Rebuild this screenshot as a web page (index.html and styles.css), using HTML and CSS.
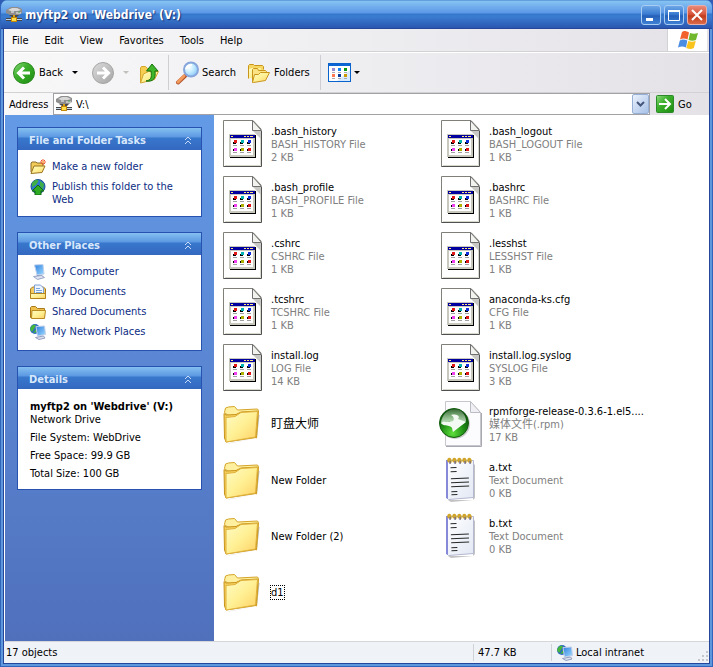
FILE: index.html
```
<!DOCTYPE html>
<html lang="en">

<head>
  <meta charset="UTF-8">
  <meta name="viewport" content="width=device-width, initial-scale=1.0">
  <title>myftp2 on 'Webdrive' (V:)</title>
  <link rel="stylesheet" href="styles.css">
</head>

<body>
  <!-- icon sprites -->
  <svg class="sprites" aria-hidden="true">
    <defs>
      <linearGradient id="g-folder" x1="0" y1="0" x2="1" y2="1">
        <stop offset="0" stop-color="#fffbc4" />
        <stop offset="0.5" stop-color="#fff094" />
        <stop offset="1" stop-color="#ffcf62" />
      </linearGradient>
      <linearGradient id="g-back" x1="0" y1="0" x2="1" y2="1">
        <stop offset="0" stop-color="#8fdc80" />
        <stop offset="0.4" stop-color="#3cb02c" />
        <stop offset="1" stop-color="#1d8c10" />
      </linearGradient>
      <linearGradient id="g-fwd" x1="0" y1="0" x2="1" y2="1">
        <stop offset="0" stop-color="#dcdcdc" />
        <stop offset="1" stop-color="#a4a4a4" />
      </linearGradient>
      <radialGradient id="g-lens" cx="0.35" cy="0.35" r="0.7">
        <stop offset="0" stop-color="#ffffff" />
        <stop offset="0.5" stop-color="#c4ecff" />
        <stop offset="1" stop-color="#8cc8fa" />
      </radialGradient>
      <radialGradient id="g-ball" cx="0.45" cy="0.85" r="0.8">
        <stop offset="0" stop-color="#5fe03c" />
        <stop offset="0.5" stop-color="#1f8e14" />
        <stop offset="1" stop-color="#0a4a08" />
      </radialGradient>
      <linearGradient id="g-gloss" x1="0" y1="0" x2="0" y2="1">
        <stop offset="0" stop-color="#fff" stop-opacity="0.2" />
        <stop offset="1" stop-color="#fff" stop-opacity="0.8" />
      </linearGradient>
      <linearGradient id="g-screen" x1="0" y1="0" x2="1" y2="1">
        <stop offset="0" stop-color="#2f7fe0" />
        <stop offset="1" stop-color="#9fdcff" />
      </linearGradient>
      <linearGradient id="g-page" x1="0" y1="0" x2="1" y2="1">
        <stop offset="0" stop-color="#ffffff" />
        <stop offset="1" stop-color="#e2e8f4" />
      </linearGradient>
    </defs>

    <symbol id="i-netdrive" viewBox="0 0 16 16">
      <path d="M0 3 5 0h7l4 2v4l-3 2H4L0 6z" fill="#8e8e8e" />
      <path d="M2 3 6 1h5l4 2-3 1H5z" fill="#d8d8d8" />
      <path d="M3 8h10l-2 2H6z" fill="#4a4a4a" />
      <path d="M5 5h3M10 6h5" stroke="#f4f4f4" />
      <path d="M12 5h2" stroke="#57a650" />
      <path d="M8 8v4" stroke="#d8a010" stroke-width="2" />
      <path d="M0 12.500h5M11 12.500h5" stroke="#444" stroke-width="3" />
      <path d="M0 12.500h5M11 12.500h5" stroke="#c6d8e8" />
      <rect x="5.500" y="10.500" width="5" height="4" fill="#ffe04c" stroke="#c88808" />
    </symbol>

    <symbol id="i-back" viewBox="0 0 24 24">
      <circle cx="12" cy="12" r="10.500" fill="url(#g-back)" stroke="#2a8a1e" />
      <path d="M18 12H7M12 6.500 6.500 12l5.500 5.500" fill="none" stroke="#fff" stroke-width="3" />
    </symbol>

    <symbol id="i-forward" viewBox="0 0 24 24">
      <circle cx="12" cy="12" r="10.500" fill="url(#g-fwd)" stroke="#a6a6a6" />
      <path d="M6 12h11M12 6.500l5.500 5.500-5.500 5.500" fill="none" stroke="#fff" stroke-width="3" />
    </symbol>

    <symbol id="i-up" viewBox="0 0 24 24">
      <path d="M2.500 21.500V7l1-1.500h4l2 2h8v4" fill="#f6cf52" stroke="#d6a62c" />
      <path d="M2.500 22 5.500 13l5-2.500h10l-4 8z" fill="url(#g-folder)" stroke="#d6a62c" />
      <path d="M8 20c5-1 6-3 5-10H8.500l5.500-7 6 7h-3c1 8-2 11-9 10z" fill="#3fb52c" stroke="#17720d" />
    </symbol>

    <symbol id="i-search" viewBox="0 0 24 24">
      <path d="M3 21.500 10 15" stroke="#b0532a" stroke-width="4" stroke-linecap="round" />
      <path d="M3 21 9 15" stroke="#f39b5e" stroke-width="3" stroke-linecap="round" />
      <circle cx="16" cy="8.500" r="7" fill="url(#g-lens)" stroke="#86a6dc" stroke-width="2" />
      <path d="M11 8c1-3 3-4 6-4" fill="none" stroke="#fff" stroke-width="2" />
    </symbol>

    <symbol id="i-folders" viewBox="0 0 24 24">
      <path d="M1.500 17.500v-13l1-1h4l1 1h8l1 1v3" fill="#f7d764" stroke="#c9961c" />
      <path d="M2 17V8l3-1h9v11z" fill="url(#g-folder)" />
      <path d="M5.500 21.500v-13l1-1h4l1 2h7l1 1v2" fill="#fbe384" stroke="#c9961c" />
      <path d="M5.500 21.500 7.500 13.500h4l2-2h9l-4 8-12 2z" fill="url(#g-folder)" stroke="#c9961c" />
    </symbol>

    <symbol id="i-views" viewBox="0 0 24 20">
      <rect x="0.500" y="0.500" width="22" height="18" fill="#fff" stroke="#0a62cc" />
      <rect x="1" y="1" width="21" height="2" fill="#0b66d4" />
      <path d="M22 7v11H9z" fill="#d6ebff" />
      <path d="M4 5h3v3H4z" fill="#9a8ad0" />
      <path d="M10 5h3v3h-3z" fill="#1684f0" />
      <path d="M16 5h3v3h-3z" fill="#089a10" />
      <path d="M4 11h3v3H4z" fill="#ff7850" />
      <path d="M10 11h3v3h-3z" fill="#0a3a98" />
      <path d="M16 11h3v3h-3z" fill="#cc9a00" />
      <path d="M4 9.500h3M10 9.500h3M16 9.500h3M4 15.500h3M10 15.500h3M16 15.500h3" stroke="#a8a8b0" />
    </symbol>

    <symbol id="i-flag" viewBox="0 0 20 18">
      <path d="M4 1c2-1.500 4-1 7 .500L9.500 8.500C7 7.500 4.500 7 2 8.500z" fill="#f2602c" />
      <path d="M12 2c3 1 5 1 8 0l-2 7c-2.500 1-5 1-7.500 0z" fill="#71b82c" />
      <path d="M1.800 9.500c2.500-1.500 5-1 7.500 0L8 16.500c-3-1.500-5-1.500-8 0z" fill="#4b8de2" />
      <path d="M10.300 10c2.500 1 5 1 7.500 0l-2 7c-2.500 1.500-5 1-7.500 0z" fill="#fac31d" />
    </symbol>

    <symbol id="i-go" viewBox="0 0 18 18">
      <rect x="0.500" y="0.500" width="17" height="17" rx="1" fill="url(#g-back)" stroke="#2d8a2a" />
      <path d="M3 9h10M9 4l5 5-5 5" fill="none" stroke="#fff" stroke-width="2" />
    </symbol>

    <symbol id="i-chevrons" viewBox="0 0 8 9">
      <path d="M1 4 4 1l3 3M1 8l3-3 3 3" fill="none" stroke="#c8dcf8" />
    </symbol>

    <symbol id="i-newfolder" viewBox="0 0 16 16">
      <path d="M1 13V4l1-1h4l1 1h6v3" fill="#f1cc58" stroke="#8a6a28" />
      <path d="M1 14.500 4 7h11l-3 6.500z" fill="url(#g-folder)" stroke="#9a7420" />
      <path d="M13 0v6M10 3h6M11 1l4 4M15 1l-4 4" stroke="#f0552c" />
      <circle cx="13" cy="3" r="1" fill="#ffd070" />
    </symbol>

    <symbol id="i-publish" viewBox="0 0 16 16">
      <circle cx="8" cy="7.500" r="7" fill="#2e78cc" stroke="#1c4f94" />
      <path d="M2 4c2-3 5-4 6-3 1 2-1 3-2 5l-4 2zM10 2l4 3-1 5-3-3z" fill="#3fae46" />
      <path d="M8 6l6 6h-3v4H5v-4H2z" fill="#2faa22" stroke="#0f6a12" />
    </symbol>

    <symbol id="i-computer" viewBox="0 0 16 16">
      <path d="M4.500 1 13 .500 14 10 7 11z" fill="url(#g-screen)" stroke="#c0d2ec" />
      <path d="M7 11h5l1 2H6z" fill="#8e9cc0" />
      <path d="M3.500 12.500l8-1 3 2-7 2z" fill="#dfe4f2" stroke="#98a4c4" />
    </symbol>

    <symbol id="i-documents" viewBox="0 0 16 16">
      <path d="M.500 14V5l2-2h11l2 2v9z" fill="#f3cd62" stroke="#a87a1c" />
      <path d="M4.500 11V1h6l3 3v7z" fill="#eef5ff" stroke="#7da0d2" />
      <path d="M6 4.500h4M6 6.500h6M6 8.500h6" stroke="#7aa6e0" />
      <path d="M.500 9.500h15v5H.500z" fill="url(#g-folder)" stroke="#b4841c" />
    </symbol>

    <symbol id="i-shared" viewBox="0 0 16 16">
      <path d="M.500 13.500v-10l1-1h4l2 2h7v9z" fill="#f0c04c" stroke="#a87a1c" />
      <path d="M1.500 14.500 2 6.500h13.500l-1 8z" fill="url(#g-folder)" stroke="#b98a20" />
    </symbol>

    <symbol id="i-network" viewBox="0 0 16 16">
      <circle cx="5" cy="5" r="5" fill="#2f69c4" />
      <path d="M0 5c1-4 4-5 6-4L4 5 2 8zM3 9l3-4 2 3z" fill="#44b63c" />
      <path d="M6 2.500 14.500 2l1 8.500-8 1.500z" fill="url(#g-screen)" stroke="#c2cfe8" />
      <path d="M5.500 13.500l8-1.500 1.500 2-6 1.500z" fill="#dde2f0" stroke="#939ec0" />
    </symbol>

    <symbol id="i-file" viewBox="0 0 48 48">
      <path d="M5 1h29l9 9v37H5z" fill="#fff" />
      <path d="M41.500 12v33.500H6" fill="none" stroke="#d8d8cc" />
      <path d="M42.500 11v35.500H5" fill="none" stroke="#505050" />
      <path d="M4.500 47V.500H34l8.500 9" fill="none" stroke="#808078" />
      <path d="M34 11h8v8z" fill="#c8c8c4" />
      <path d="M33.500.500v10h9z" fill="#f2f2ee" stroke="#707070" />
      <rect x="11" y="15" width="26" height="23" fill="#000" />
      <rect x="10" y="14" width="26" height="23" fill="#c8c8bc" />
      <rect x="12" y="19" width="22" height="16" fill="#fff" />
      <rect x="11" y="15" width="25" height="3" fill="#0000a0" />
      <path d="M12 16.500h2M25 16.500h2M28 16.500h2M31 16.500h3" stroke="#ffe880" />
      <path d="M14 25.500h4M21 25.500h4M28 25.500h4M14 32.500h4M21 32.500h4M28 32.500h4" stroke="#a0a0a0" />
      <path d="M14 22h3v2h-3zM21 22h3v2h-3zM28 22h3v2h-3zM14 29h3v2h-3zM21 29h3v2h-3zM28 29h3v2h-3z" fill="#000" />
      <path d="M15 20h3v3h-3zM29 28h3v3h-3z" fill="#e01818" />
      <path d="M22 20h3v3h-3z" fill="#00b4b4" />
      <path d="M29 20h3v3h-3z" fill="#1030e0" />
      <path d="M15 28h3v3h-3z" fill="#f040f0" />
      <path d="M22 28h3v3h-3z" fill="#b0b000" />
    </symbol>

    <symbol id="i-folder" viewBox="0 0 48 48">
      <path d="M8 43.500 38 38V14l2.500 1L38 38 12 43z" fill="#8e8e8e" opacity="0.600" />
      <path d="M5.500 12.500 6.500 8l3-1 6-.500 3 3.500 20-1 1 1.500-2 27.500z" fill="#fff0a0" stroke="#d4a428" />
      <path d="M7 42 5.500 38 5 13.500 7 15l10-.500 5-2.500 17-1-2 26.500z" fill="#f5cf5c" stroke="#c8941c" />
      <path d="M7 42V17.500l9-1 6-4 16.500-1-2 25.500z" fill="url(#g-folder)" stroke="#e0b23c" />
    </symbol>

    <symbol id="i-media" viewBox="0 0 48 48">
      <path d="M8.500 1.500h25l10 11v33h-35z" fill="#fcfcfe" stroke="#c6c6cc" />
      <path d="M44.500 13v33.500H9" fill="none" stroke="#a8a8b0" />
      <path d="M33.500 1.500v11h10z" fill="#f0f0f4" stroke="#bcbcc4" />
      <circle cx="18" cy="24" r="15" fill="#888" opacity="0.400" />
      <circle cx="17" cy="23" r="14.500" fill="url(#g-ball)" stroke="#145c10" />
      <path d="M4 23C5 13 13 7 22 10c4 2 7 6 7 11-3 6-12 4-15 1-4-1-8 0-10 1z" fill="url(#g-gloss)" />
      <path d="M14 15c5-1 7 0 8 2l-1 2 8 3-13 10c-1-3 0-5-4-6-3-1-6 0-8-3 4-3 9 0 12-2 2-2 0-5-2-6z" fill="#f2faf2" />
    </symbol>

    <symbol id="i-text" viewBox="0 0 48 48">
      <path d="M11 44h25V7l2 2v33l-2 2-22 2z" fill="#9a9a9a" opacity="0.600" />
      <path d="M9.500 4.500h27v37l-25 2-2-2z" fill="url(#g-page)" stroke="#b4b8d0" />
      <path d="M9 4v38l2 1V4z" fill="#8688d8" />
      <path d="M14 11.500h6M14 15.500h6M14 22.500h18M14 26.500h18M14 30.500h18M14 35.500h6M14 38.500h6" transform="rotate(-2 20 26)" stroke="#282828" />
      <path d="M12 6c-2-2 0-4 1-3s1 3 0 4M17 6c-2-2 0-4 1-3s1 3 0 4M22 6c-2-2 0-4 1-3s1 3 0 4M27 6c-2-2 0-4 1-3s1 3 0 4M32 6c-2-2 0-4 1-3s1 3 0 4" fill="none" stroke="#cfa428" stroke-width="2" />
      <path d="M13 5v3M18 5v3M23 5v3M28 5v3M33 5v3" stroke="#4a4a9a" />
    </symbol>
  </svg>

  <div class="window">
    <header class="titlebar">
      <svg class="icon16"><use href="#i-netdrive" /></svg>
      <h1>myftp2 on 'Webdrive' (V:)</h1>
      <div class="controls">
        <button class="ctl" aria-label="Minimize"><svg viewBox="0 0 18 18"><path d="M4 13.500h7" stroke="#fff" stroke-width="3" /></svg></button>
        <button class="ctl" aria-label="Maximize"><svg viewBox="0 0 18 18"><path d="M3 5h12" stroke="#fff" stroke-width="2" /><path d="M3.500 4.500h11v10h-11z" fill="none" stroke="#fff" /></svg></button>
        <button class="ctl close" aria-label="Close"><svg viewBox="0 0 18 18"><path d="M4 4l10 10M14 4 4 14" stroke="#fff" stroke-width="2" /></svg></button>
      </div>
    </header>

    <div class="client">
      <nav class="menubar">
        <button>File</button>
        <button>Edit</button>
        <button>View</button>
        <button>Favorites</button>
        <button>Tools</button>
        <button>Help</button>
        <div class="flag"><svg><use href="#i-flag" /></svg></div>
      </nav>

      <div class="toolbar">
        <button class="tool back"><svg class="icon24"><use href="#i-back" /></svg>Back<i class="arrow"></i></button>
        <button class="tool forward" aria-label="Forward" disabled><svg class="icon24"><use href="#i-forward" /></svg><i class="arrow"></i></button>
        <button class="tool up" aria-label="Up"><svg class="icon24"><use href="#i-up" /></svg></button>
        <span class="sep"></span>
        <button class="tool search"><svg class="icon24"><use href="#i-search" /></svg>Search</button>
        <button class="tool folders"><svg class="icon24"><use href="#i-folders" /></svg>Folders</button>
        <span class="sep"></span>
        <button class="tool views" aria-label="Views"><svg class="icon24"><use href="#i-views" /></svg><i class="arrow"></i></button>
      </div>

      <form class="address">
        <label for="path">Address</label>
        <div class="combo">
          <svg class="icon16"><use href="#i-netdrive" /></svg>
          <input type="text" id="path" value="V:\">
          <button type="button" aria-label="Show addresses"><svg viewBox="0 0 9 7"><path d="M1 1l3.500 3.500L8 1" fill="none" stroke="#45577c" stroke-width="2" /></svg></button>
        </div>
        <button type="button" class="go"><svg><use href="#i-go" /></svg>Go</button>
      </form>

      <div class="content">
        <aside class="sidebar">
          <section class="panel">
            <button class="panel-head">File and Folder Tasks<svg><use href="#i-chevrons" /></svg></button>
            <ul class="tasks">
              <li><svg class="icon16"><use href="#i-newfolder" /></svg><a href="#">Make a new folder</a></li>
              <li><svg class="icon16"><use href="#i-publish" /></svg><a href="#">Publish this folder to the Web</a></li>
            </ul>
          </section>

          <section class="panel">
            <button class="panel-head">Other Places<svg><use href="#i-chevrons" /></svg></button>
            <ul class="tasks">
              <li><svg class="icon16"><use href="#i-computer" /></svg><a href="#">My Computer</a></li>
              <li><svg class="icon16"><use href="#i-documents" /></svg><a href="#">My Documents</a></li>
              <li><svg class="icon16"><use href="#i-shared" /></svg><a href="#">Shared Documents</a></li>
              <li><svg class="icon16"><use href="#i-network" /></svg><a href="#">My Network Places</a></li>
            </ul>
          </section>

          <section class="panel">
            <button class="panel-head">Details<svg><use href="#i-chevrons" /></svg></button>
            <div class="details">
              <p><strong>myftp2 on 'Webdrive' (V:)</strong><br>Network Drive</p>
              <p>File System: WebDrive</p>
              <p>Free Space: 99.9 GB</p>
              <p>Total Size: 100 GB</p>
            </div>
          </section>
        </aside>

        <main class="files">
          <div class="file"><svg><use href="#i-file" /></svg><div>.bash_history<small>BASH_HISTORY File</small><small>2 KB</small></div></div>
          <div class="file"><svg><use href="#i-file" /></svg><div>.bash_logout<small>BASH_LOGOUT File</small><small>1 KB</small></div></div>
          <div class="file"><svg><use href="#i-file" /></svg><div>.bash_profile<small>BASH_PROFILE File</small><small>1 KB</small></div></div>
          <div class="file"><svg><use href="#i-file" /></svg><div>.bashrc<small>BASHRC File</small><small>1 KB</small></div></div>
          <div class="file"><svg><use href="#i-file" /></svg><div>.cshrc<small>CSHRC File</small><small>1 KB</small></div></div>
          <div class="file"><svg><use href="#i-file" /></svg><div>.lesshst<small>LESSHST File</small><small>1 KB</small></div></div>
          <div class="file"><svg><use href="#i-file" /></svg><div>.tcshrc<small>TCSHRC File</small><small>1 KB</small></div></div>
          <div class="file"><svg><use href="#i-file" /></svg><div>anaconda-ks.cfg<small>CFG File</small><small>1 KB</small></div></div>
          <div class="file"><svg><use href="#i-file" /></svg><div>install.log<small>LOG File</small><small>14 KB</small></div></div>
          <div class="file"><svg><use href="#i-file" /></svg><div>install.log.syslog<small>SYSLOG File</small><small>3 KB</small></div></div>
          <div class="file"><svg><use href="#i-folder" /></svg><div class="cjk">盯盘大师</div></div>
          <div class="file"><svg><use href="#i-media" /></svg><div>rpmforge-release-0.3.6-1.el5....<small>媒体文件(.rpm)</small><small>17 KB</small></div></div>
          <div class="file"><svg><use href="#i-folder" /></svg><div>New Folder</div></div>
          <div class="file"><svg><use href="#i-text" /></svg><div>a.txt<small>Text Document</small><small>0 KB</small></div></div>
          <div class="file"><svg><use href="#i-folder" /></svg><div>New Folder (2)</div></div>
          <div class="file"><svg><use href="#i-text" /></svg><div>b.txt<small>Text Document</small><small>0 KB</small></div></div>
          <div class="file"><svg><use href="#i-folder" /></svg><div class="focused">d1</div></div>
        </main>
      </div>

      <footer class="statusbar">
        <span class="count">17 objects</span>
        <span class="size">47.7 KB</span>
        <span class="zone"><svg class="icon16"><use href="#i-network" /></svg>Local intranet</span>
        <svg class="grip" viewBox="0 0 12 12"><path d="M9 0h2v2H9zM5 4h2v2H5zM9 4h2v2H9zM1 8h2v2H1zM5 8h2v2H5zM9 8h2v2H9z" fill="#c4c6cc" /></svg>
      </footer>
    </div>
  </div>
</body>

</html>
```
FILE: styles.css
```
* {
  box-sizing: border-box;
}

body {
  margin: 0;
  background: #2f5cb4;
  font: 11px/13px "DejaVu Sans Condensed", Tahoma, "Noto Sans CJK SC", sans-serif;
  color: #000;
}

button,
input {
  font: inherit;
  color: inherit;
  border: 0;
  padding: 0;
  background: none;
}

svg {
  display: block;
  flex: none;
}

.sprites {
  position: absolute;
  width: 0;
  height: 0;
}

.icon16 {
  width: 16px;
  height: 16px;
}

.icon24 {
  width: 24px;
  height: 24px;
}

/* window frame */
.window {
  min-height: 100vh;
  display: flex;
  flex-direction: column;
  border-radius: 7px 7px 0 0;
  background: #5f97dc;
  border: 1px solid #2f66bc;
  border-top: 0;
}

.titlebar {
  height: 29px;
  display: flex;
  align-items: center;
  padding: 2px 5px 0 5px;
  border-radius: 7px 7px 0 0;
  border-bottom: 1px solid #24479c;
  background: linear-gradient(#3f78c8 0, #86c4f2 1px, #74b0ee 6px, #5c98e6 13px, #3478cc 14px, #3a7cd0 17px, #2a56b0 28px);
}

.titlebar h1 {
  flex: 1;
  margin: 0 0 0 3px;
  font-size: 12px;
  line-height: 16px;
  color: #fff;
  text-shadow: 1px 1px 1px #143078;
}

.controls {
  display: flex;
  gap: 3px;
}

.ctl {
  width: 20px;
  height: 20px;
  border: 1px solid #a8ccf2;
  border-radius: 3px;
  background: linear-gradient(#6ca6e6, #3a7cd2 45%, #2560b8 55%, #3e80d4);
}

.ctl.close {
  border-color: #e8b0a8;
  background: linear-gradient(#e88a78, #d8563c 45%, #c03c1c 55%, #dc6a48);
}

.client {
  flex: 1;
  display: flex;
  flex-direction: column;
  margin: 0 2px 2px 2px;
  border: 1px solid #24479c;
  border-top: 0;
  background: #fff;
}

/* bars */
.menubar {
  height: 23px;
  display: flex;
  background: linear-gradient(90deg, #f8f8f9, #e4e2e7);
  border-bottom: 1px solid #d2d2d4;
}

.menubar button {
  padding: 0 8px;
}

.flag {
  width: 42px;
  margin-left: auto;
  padding: 1px 10px;
  background: #fff;
  border-left: 1px solid #d2d2d4;
  border-right: 2px solid #e4e2e7;
}

.flag svg {
  width: 20px;
  height: 20px;
}

.toolbar {
  height: 41px;
  display: flex;
  align-items: center;
  padding-left: 8px;
  background: linear-gradient(90deg, #f8f8f9, #e4e2e7);
  border-top: 1px solid #fff;
  border-bottom: 1px solid #d2d2d4;
}

.tool {
  height: 32px;
  display: flex;
  align-items: center;
  gap: 3px;
}

.arrow {
  border: 3px solid transparent;
  border-top-color: #000;
  border-bottom: 0;
}

.back {
  width: 79px;
}

.back .arrow {
  margin-left: 6px;
}

.forward {
  width: 47px;
  gap: 8px;
}

.forward .arrow {
  border-top-color: #c0c0bc;
}

.up {
  width: 30px;
}

.sep {
  width: 1px;
  height: 35px;
  margin-right: 6px;
  background: #cfced2;
}

.search {
  width: 72px;
}

.folders {
  width: 73px;
}

.views {
  padding-left: 1px;
  gap: 2px;
}

.address {
  height: 22px;
  display: flex;
  align-items: center;
  padding-left: 5px;
  background: linear-gradient(90deg, #f8f8f9, #e4e2e7);
}

.address label {
  width: 44px;
}

.combo {
  flex: 1;
  height: 22px;
  display: flex;
  align-items: center;
  padding-left: 2px;
  background: #fff;
  border: 1px solid #a2a2a6;
}

.combo input {
  flex: 1;
  min-width: 0;
  height: 18px;
  padding-left: 4px;
}

.combo button {
  width: 17px;
  height: 20px;
  display: flex;
  align-items: center;
  justify-content: center;
  border: 1px solid #96b0d6;
  border-radius: 2px;
  background: linear-gradient(135deg, #eaf1fc, #a8c2e8);
}

.combo button svg {
  width: 9px;
  height: 7px;
}

.go {
  width: 59px;
  display: flex;
  align-items: center;
  gap: 4px;
  padding-left: 6px;
}

.go svg {
  width: 18px;
  height: 18px;
}

/* main area */
.content {
  flex: 1;
  display: flex;
  border-left: 1px solid #fff;
}

.sidebar {
  width: 209px;
  flex: none;
  padding: 12px;
  background: linear-gradient(#639ae6, #5070bc);
}

.panel {
  margin-bottom: 15px;
  border: 1px solid #2852b0;
  background: #fff;
}

.panel-head {
  width: 100%;
  height: 22px;
  display: flex;
  align-items: center;
  justify-content: space-between;
  padding: 2px 9px 0 11px;
  font-weight: bold;
  color: #d8e8fc;
  background: linear-gradient(#84c0f0, #5c98e2 9px, #3878cc 10px, #3468c0);
}

.panel-head svg {
  width: 8px;
  height: 9px;
}

.tasks {
  margin: 0;
  padding: 9px 12px 6px 12px;
  list-style: none;
}

.tasks li {
  display: flex;
  gap: 6px;
  margin-bottom: 4px;
}

.tasks a {
  color: #0c2c84;
  text-decoration: none;
}

.tasks li a {
  margin-top: 1px;
}

.details {
  padding: 11px 12px 4px 12px;
}

.details p {
  margin: 0 0 5px 0;
}

.files {
  flex: 1;
  display: grid;
  grid-template-columns: repeat(auto-fill, 218px);
  grid-auto-rows: 56px;
  align-content: start;
  padding: 1px 0 0 5px;
}

.file {
  display: flex;
  align-items: center;
  gap: 4px;
  white-space: nowrap;
}

.file > svg {
  width: 48px;
  height: 48px;
}

.file small {
  display: block;
  height: 13px;
  font-size: 11px;
  color: #808080;
}

.file .cjk {
  font-size: 12px;
}

.file .focused {
  outline: 1px dotted #000;
}

/* status bar */
.statusbar {
  height: 22px;
  display: flex;
  align-items: center;
  background: #eff2f7;
  border-top: 1px solid #d4d6da;
}

.statusbar span {
  height: 17px;
  display: flex;
  align-items: center;
}

.count {
  flex: 1;
  padding-left: 2px;
}

.size {
  width: 78px;
  padding-left: 4px;
  border-left: 1px solid #d0d2d8;
}

.zone {
  width: 146px;
  gap: 3px;
  padding-left: 5px;
  border-left: 1px solid #d0d2d8;
}

.grip {
  width: 12px;
  height: 12px;
  align-self: flex-end;
}
```
